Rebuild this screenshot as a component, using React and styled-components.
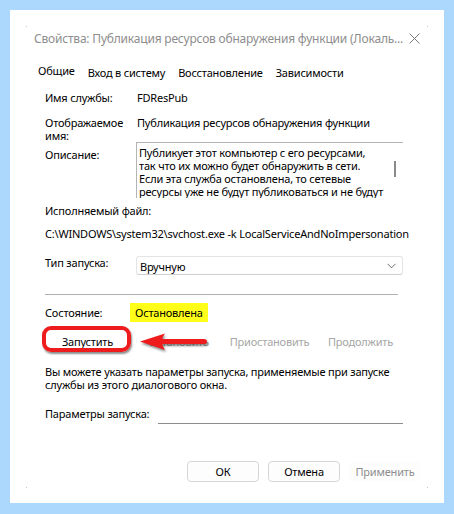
import React from "react";
import styled, { createGlobalStyle } from "styled-components";

const Global = createGlobalStyle`
  html, body { margin: 0; padding: 0; background: #add8fd; }
  body { font-family: "Noto Sans", "Segoe UI", sans-serif; }
`;

const Page = styled.div`
  padding: 10px;
  background: #add8fd;
  width: 434px;
  height: 494px;
`;

const Window = styled.div`
  position: relative;
  width: 434px;
  height: 493px;
  background: #fff;
  display: flex;
  flex-direction: column;
  font-size: 11px;
  letter-spacing: -0.2px;
  color: #000;
`;

const CornerDot = styled.i`
  position: absolute;
  width: 1px;
  height: 1px;
  background: #c8c8c8;
  left: ${(p) => (p.$right ? "417px" : "16px")};
  top: ${(p) => (p.$bottom ? "477px" : "16px")};
`;

const TitleBar = styled.div`
  height: 56px;
  display: flex;
  align-items: center;
  justify-content: space-between;
  padding: 0 24px 0 24px;
`;

const Title = styled.div`
  font-size: 12px;
  letter-spacing: -0.2px;
  color: #8e8e8e;
  white-space: nowrap;
`;

const Close = styled.svg`
  width: 11px;
  height: 11px;
  flex: none;
`;

const TabStrip = styled.div`
  display: flex;
  align-items: flex-end;
  gap: 13px;
  height: 14px;
  padding-left: 28px;
`;

const Tab = styled.div`
  line-height: 14px;
  white-space: nowrap;
  padding-bottom: ${(p) => (p.$active ? "2px" : "0")};
`;

const Body = styled.div`
  display: flex;
  flex-direction: column;
  padding: 0 41px 0 35px;
`;

const Row = styled.div`
  display: grid;
  grid-template-columns: ${(p) => p.$label || "92px"} 1fr;
  align-items: ${(p) => p.$align || "center"};
  height: ${(p) => p.$h}px;
  margin-top: ${(p) => p.$mt || 0}px;
  line-height: 13px;
  white-space: nowrap;
`;

const Label = styled.div`
  padding-top: ${(p) => p.$pt || 0}px;
  line-height: ${(p) => p.$lh || 13}px;
`;

const DescBox = styled.div`
  position: relative;
  margin-left: -1px;
  height: 56px;
  box-sizing: border-box;
  border-top: 1px solid #b4b4b4;
  border-left: 1px solid #b4b4b4;
  padding: 3px 0 0 2px;
  line-height: 13px;
  overflow: hidden;
`;

const ScrollThumb = styled.span`
  position: absolute;
  right: 7px;
  top: 18px;
  width: 2px;
  height: 16px;
  background: #8a8a8a;
`;

const Select = styled.div`
  height: 19px;
  box-sizing: border-box;
  margin-left: -1px;
  border: 1px solid #e4e4e4;
  border-bottom-color: #cfcfcf;
  border-radius: 3px;
  display: flex;
  align-items: center;
  justify-content: space-between;
  padding: 1px 6px 0 3px;
`;

const Separator = styled.div`
  margin-top: 19px;
  height: 1px;
  width: 353px;
  background: #b0b0b0;
`;

const Marker = styled.span`
  display: inline-block;
  justify-self: start;
  margin-left: -7px;
  padding: 0 5px;
  height: 19px;
  line-height: 19px;
  background: #ffff1a;
`;

const ButtonRow = styled.div`
  position: relative;
  margin-top: 8px;
  display: grid;
  grid-template-columns: repeat(4, 85px);
  gap: 6px;
  height: 22px;
`;

const CtlButton = styled.div`
  position: relative;
  display: flex;
  align-items: center;
  justify-content: center;
  color: ${(p) => (p.$disabled ? "#a6a6a6" : "#000")};

  ${(p) =>
    p.$marked &&
    `
    &::after {
      content: "";
      position: absolute;
      inset: -4px -1px 0 -3px;
      border: 4px solid #ee1c1c;
      border-radius: 9px;
      box-shadow: 1px 2px 2px rgba(0, 0, 0, 0.45);
    }
  `}
`;

const Arrow = styled.svg`
  position: absolute;
  left: 93px;
  top: 2px;
  width: 72px;
  height: 20px;
  filter: drop-shadow(1px 2px 1px rgba(0, 0, 0, 0.45));
`;

const Note = styled.div`
  margin-top: 13px;
  line-height: 13px;
  white-space: nowrap;
`;

const ParamInput = styled.div`
  align-self: start;
  height: 20px;
  border-bottom: 1px solid #8c8c8c;
`;

const Footer = styled.div`
  margin-top: auto;
  display: flex;
  justify-content: flex-end;
  gap: 9px;
  padding: 0 23px 21px 0;
`;

const DialogButton = styled.div`
  width: 72px;
  height: 21px;
  box-sizing: border-box;
  display: flex;
  align-items: center;
  justify-content: center;
  border: 1px solid ${(p) => (p.$disabled ? "transparent" : "#d6d6d6")};
  border-radius: 4px;
  background: #fdfdfd;
  color: ${(p) => (p.$disabled ? "#8e8e8e" : "#000")};
`;

export default function App() {
  return (
    <Page>
      <Global />
      <Window>
        <CornerDot />
        <CornerDot $right />
        <CornerDot $bottom />
        <CornerDot $right $bottom />

        <TitleBar>
          <Title>Свойства: Публикация ресурсов обнаружения функции (Локаль...</Title>
          <Close viewBox="0 0 11 11">
            <path d="M0.5 0.5 L10.5 10.5 M10.5 0.5 L0.5 10.5" stroke="#7a7a7a" strokeWidth="1" fill="none" />
          </Close>
        </TitleBar>

        <TabStrip>
          <Tab $active>Общие</Tab>
          <Tab>Вход в систему</Tab>
          <Tab>Восстановление</Tab>
          <Tab>Зависимости</Tab>
        </TabStrip>

        <Body>
          <Row $h={18} $mt={8}>
            <Label>Имя службы:</Label>
            <div>FDResPub</div>
          </Row>

          <Row $h={26} $mt={10} $align="start">
            <Label>
              Отображаемое
              <br />
              имя:
            </Label>
            <div>Публикация ресурсов обнаружения функции</div>
          </Row>

          <Row $h={56} $align="start">
            <Label $pt={6}>Описание:</Label>
            <DescBox>
              Публикует этот компьютер с его ресурсами,
              <br />
              так что их можно будет обнаружить в сети.
              <br />
              Если эта служба остановлена, то сетевые
              <br />
              ресурсы уже не будут публиковаться и не будут
              <ScrollThumb />
            </DescBox>
          </Row>

          <Row $h={18} $mt={3} $label="1fr">
            <div>Исполняемый файл:</div>
          </Row>

          <Row $h={18} $mt={5} $label="1fr">
            <div>C:\WINDOWS\system32\svchost.exe -k LocalServiceAndNoImpersonation</div>
          </Row>

          <Row $h={19} $mt={14} $align="start">
            <Label $lh={14}>Тип запуска:</Label>
            <Select>
              <span>Вручную</span>
              <svg width="9" height="6" viewBox="0 0 9 6">
                <path d="M0.5 0.8 L4.5 4.8 L8.5 0.8" stroke="#6e6e6e" strokeWidth="1" fill="none" />
              </svg>
            </Select>
          </Row>

          <Separator />

          <Row $h={19} $mt={8}>
            <Label>Состояние:</Label>
            <Marker>Остановлена</Marker>
          </Row>

          <ButtonRow>
            <CtlButton $marked>Запустить</CtlButton>
            <CtlButton $disabled>Остановить</CtlButton>
            <CtlButton $disabled>Приостановить</CtlButton>
            <CtlButton $disabled>Продолжить</CtlButton>
            <Arrow viewBox="0 0 72 20">
              <path
                d="M2 9.5 L27 1.5 Q24 6 24.5 7 L66 7 Q69 7 69 9.5 Q69 12 66 12 L24.5 12 Q24 13 27 18 Z"
                fill="#ee1c1c"
              />
            </Arrow>
          </ButtonRow>

          <Note>
            Вы можете указать параметры запуска, применяемые при запуске
            <br />
            службы из этого диалогового окна.
          </Note>

          <Row $h={18} $mt={12} $label="113px">
            <Label>Параметры запуска:</Label>
            <ParamInput />
          </Row>
        </Body>

        <Footer>
          <DialogButton>ОК</DialogButton>
          <DialogButton>Отмена</DialogButton>
          <DialogButton $disabled>Применить</DialogButton>
        </Footer>
      </Window>
    </Page>
  );
}
